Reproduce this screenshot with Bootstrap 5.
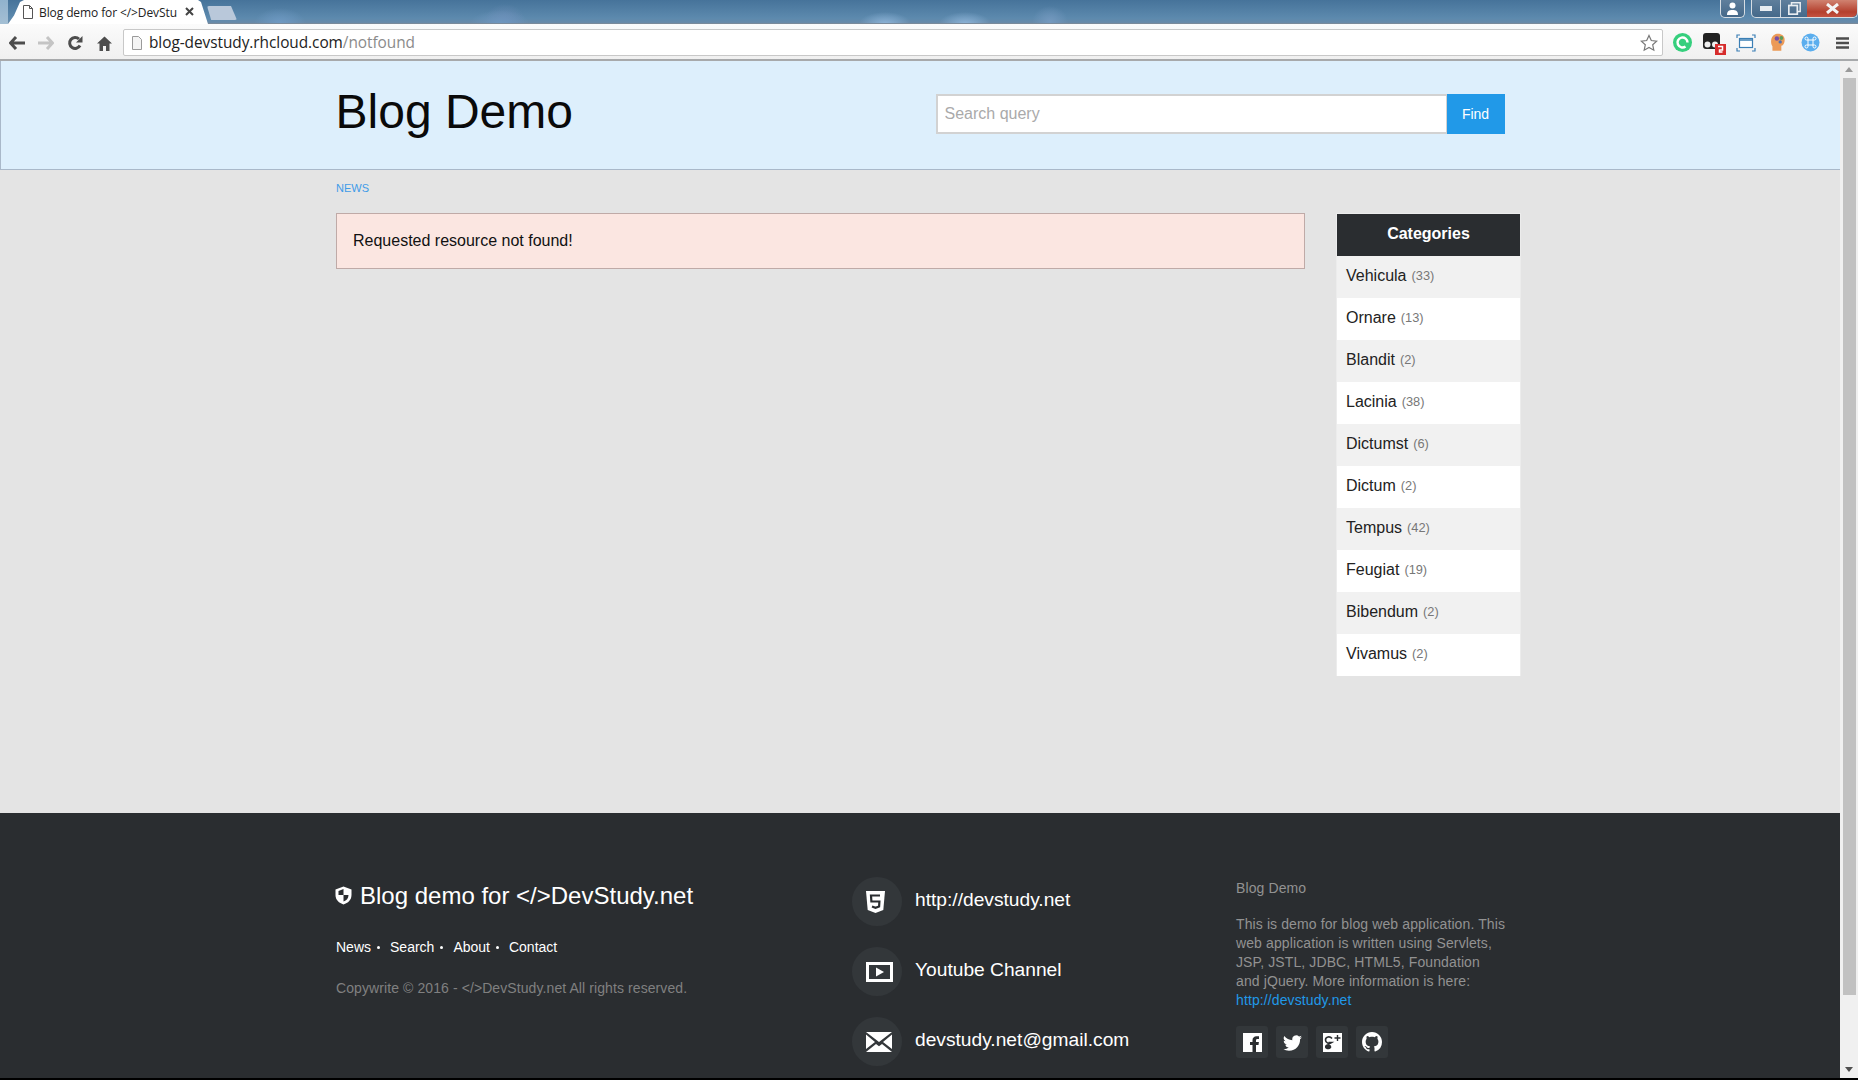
<!DOCTYPE html>
<html lang="en">
<head>
<meta charset="utf-8">
<title>Blog demo for &lt;/&gt;DevStudy.net</title>
<link rel="stylesheet" href="https://cdn.jsdelivr.net/npm/bootstrap@5.3.0/dist/css/bootstrap.min.css">
<style>
html,body{height:1080px;overflow:hidden}
body{margin:0;background:#000;font-family:"Liberation Sans",Arial,sans-serif;color:#0a0a0a}
.shell-top{height:24px;background:
 radial-gradient(ellipse 26px 16px at 280px 24px,#6f9ac4,transparent),
 radial-gradient(ellipse 30px 14px at 500px 24px,#6f97bf,transparent),
 radial-gradient(ellipse 20px 16px at 505px 20px,#688ab4,transparent),
 radial-gradient(ellipse 26px 12px at 885px 24px,#8db4d8,transparent),
 radial-gradient(ellipse 26px 12px at 965px 24px,#8db4d8,transparent),
 radial-gradient(ellipse 18px 16px at 1050px 22px,#7499bf,transparent),
 linear-gradient(#46739a,#5d8aae 80%,#6a8aa8);
 border-bottom:1px solid #7a8a9a}
.shell-left{width:8px;height:24px;background:linear-gradient(#90b2cd,#a4bfd4)}
.tab-main{width:200px;height:24px;margin-left:0;background:#fff;clip-path:polygon(0 100%,3% 65%,6% 8%,8% 0,95% 0,96.500% 8%,100% 100%);padding:4px 0 0 25px;font:12px/18px "Open Sans","Liberation Sans",sans-serif;color:#222;white-space:nowrap;position:relative}
.tab-name{width:139px;overflow:hidden;letter-spacing:-.1px;margin-left:6px}
.tab-doc{position:absolute;left:14px;top:5px}
.tab-x{position:absolute;left:176px;top:6px}
.tab-new{width:30px;height:14px;margin:6px 0 0 -1px;background:#b9c8da;clip-path:polygon(0 0,80% 0,100% 100%,14% 100%);border-radius:2px}
.win-box{height:18px;border:1px solid #d6dde3;border-top:0;border-radius:0 0 5px 5px;background:linear-gradient(#5f7f9c,#45698a)}
.win-user{width:25px;margin-right:6px}
.win-min,.win-max{width:28px}
.win-max{width:27px;border-left:1px solid #d6dde3}
.win-close{width:50px;background:linear-gradient(#d08270,#b4402e 70%,#c45240);border-radius:0 0 5px 0}
.win-group{padding:0;overflow:hidden}
.shell-bar{height:37px;background:linear-gradient(#fbfbfb,#f0f0f0);border-bottom:2px solid #a7a9ab;padding:2px 0 0 9px}
.nav-ico{width:29px}
.nav-home{padding-left:1px}
.addr{width:1540px;height:27px;margin-left:-2px;background:#fff;border:1px solid #c8c8c8;border-radius:2px;padding-left:7px;padding-right:4px;font:15.400px/25px "Open Sans","Liberation Sans",sans-serif;color:#222;letter-spacing:-.05px}
.addr-path{color:#8b8b8b}
.addr-text{margin-left:6px}
.ext-row{margin-left:3px}
.ext-cell{width:32px}
.view{height:1017px}
.page-col{width:1840px;background:#e4e4e4}
.scroll-col{width:18px;background:#f0f0f0;padding-top:6px}
.scroll-thumb{width:13px;height:917px;margin:6px auto 0;background:#c1c1c1}
.scroll-up{width:0;height:0;margin:0 auto;border-left:4px solid transparent;border-right:4px solid transparent;border-bottom:5px solid #9a9a9a}
.scroll-down{width:0;height:0;margin:72px auto 0;border-left:4px solid transparent;border-right:4px solid transparent;border-top:5px solid #505050}
.site-head{height:109px;background:#ddeffc;border:1px solid #a9b8c9;border-top:0;border-right:0}
.blog-wrap{width:1200px;margin:0 auto;padding:0 16px}
.site-title{font-size:48px;line-height:58px;font-weight:400;margin:22px 0 0 -1px;color:#0a0a0a}
.search-box{width:569px;margin-top:33px}
.search-box .form-control{height:40px;border:2px solid #d2d2d2;border-radius:0;padding:0 7px;font-size:16px;color:#333;box-shadow:none;background:#fff}
.search-box .form-control::placeholder{color:#aaa}
.btn-find{width:58px;height:40px;background:#2199e8;color:#fff;border:0;border-radius:0;font-size:14px;padding:0}
.content-area{flex:1 1 auto}
.crumb-link{display:block;font-size:11px;line-height:13px;color:#3e9be8;text-transform:uppercase;text-decoration:none;margin:12px 0 18px}
.miss-alert{height:56px;width:969px;background:#fbe6e1;border:1px solid #bfaaa7;border-radius:0;padding:0 0 1px 16px;font-size:16px;color:#111;margin:0}
.cat-box{width:185px;margin-top:43px;border:1px solid #ececec;border-bottom:0}
.cat-title{height:42px;background:#2a2d30;color:#fff;font-size:16px;font-weight:700;padding-bottom:2px}
.cat-line{height:42px;padding:0 8px 2px 9px;background:#fff;border:0;border-radius:0;font-size:16px;color:#222;line-height:1}
.cat-line:nth-child(odd){background:#f1f1f1}
.cat-num{color:#777;font-size:12.800px;margin-left:5px}
.site-foot{height:265px;background:#2a2d30;color:#fff}
.foot-a,.foot-b,.foot-c{flex:none}
.foot-a{width:516px;padding-top:68px}
.foot-b{width:384px;padding-top:64px;gap:21px}
.foot-c{width:272px;padding-top:66px;font-size:14px;line-height:19px;color:#929292;letter-spacing:.11px}
.foot-title{font-size:24px;line-height:29px;font-weight:400;margin:0;white-space:nowrap;gap:8px}
.foot-shield{margin-left:-1px}
.foot-nav{font-size:14px;line-height:17px;margin-top:29px;gap:6px}
.foot-nav a{color:#fff;text-decoration:none}
.foot-dot{width:3px;height:3px;border-radius:50%;background:#fff}
.foot-copy{font-size:14px;line-height:17px;color:#808080;margin:24px 0 0;letter-spacing:.09px}
.round-ico{width:50px;height:49px;border-radius:50%;background:#33373a;flex:none;padding-left:14px}
.foot-link{font-size:19.200px;line-height:23px;color:#fff;text-decoration:none;margin:0 0 4px 1px}
.foot-p{margin:17px 0 0}
.foot-p a{color:#2199e8;text-decoration:none}
.social-row{gap:8px;margin-top:16px}
.social-btn{width:32px;height:32px;background:#33373a;border-radius:3px}
.base-strip{height:2px;background:#000}
</style>
</head>
<body class="d-flex flex-column">

<div class="shell-top d-flex align-items-start">
  <div class="shell-left"></div>
  <div class="tab-main">
    <svg class="tab-doc" width="12" height="14" viewBox="0 0 12 14"><path d="M1.500.5h6l3 3v10h-9z M7.500.5v3h3" fill="#fff" stroke="#555"/></svg>
    <div class="tab-name">Blog demo for &lt;/&gt;DevStu</div>
    <svg class="tab-x" width="11" height="11" viewBox="0 0 11 11"><path d="M2 2l7 7M9 2l-7 7" stroke="#444" stroke-width="2"/></svg>
  </div>
  <div class="tab-new"></div>
  <div class="ms-auto d-flex align-items-start">
    <div class="win-box win-user d-flex align-items-center justify-content-center">
      <svg width="13" height="13" viewBox="0 0 13 13"><circle cx="6.500" cy="3.500" r="3" fill="#fff"/><path d="M1 13c0-4 2-5 5.500-5s5.500 1 5.500 5z" fill="#fff"/></svg>
    </div>
    <div class="win-box win-group d-flex">
      <div class="win-min d-flex align-items-center justify-content-center"><svg width="12" height="5" viewBox="0 0 12 5"><rect width="12" height="5" fill="#e8edf1"/></svg></div>
      <div class="win-max d-flex align-items-center justify-content-center"><svg width="13" height="13" viewBox="0 0 13 13"><path d="M3.500 3V.8h8.700v8.700H10" fill="none" stroke="#e8edf1" stroke-width="1.500"/><rect x=".8" y="3.500" width="8.500" height="8.700" fill="none" stroke="#e8edf1" stroke-width="1.700"/></svg></div>
      <div class="win-close d-flex align-items-center justify-content-center"><svg width="17" height="11" viewBox="0 0 17 11"><path d="M3 1l11 9M14 1L3 10" stroke="#f4f4f4" stroke-width="3"/></svg></div>
    </div>
  </div>
</div>

<div class="shell-bar d-flex align-items-center">
  <div class="nav-ico"><svg width="16" height="14" viewBox="0 0 16 14"><path d="M7 1L1.500 7 7 13M2 7h14" fill="none" stroke="#4d4d4d" stroke-width="3"/></svg></div>
  <div class="nav-ico"><svg width="16" height="14" viewBox="0 0 16 14"><path d="M9 1l5.500 6L9 13M14 7H0" fill="none" stroke="#c4c4c4" stroke-width="3"/></svg></div>
  <div class="nav-ico"><svg width="16" height="16" viewBox="0 0 16 16"><path d="M13 10.500A5.500 5.500 0 1 1 12 4" fill="none" stroke="#4d4d4d" stroke-width="3"/><path d="M15.500 1v6.500H9z" fill="#4d4d4d"/></svg></div>
  <div class="nav-ico nav-home"><svg width="15" height="15" viewBox="0 0 15 15"><path d="M7.500.5L0 7.500h2.500V15H6v-5h3v5h3.500V7.500H15z" fill="#4d4d4d"/></svg></div>
  <div class="addr d-flex align-items-center">
    <svg width="12" height="14" viewBox="0 0 12 14"><path d="M1.500.5h6l3 3v10h-9z" fill="#f4f4f4" stroke="#9a9a9a"/></svg>
    <span class="addr-text">blog-devstudy.rhcloud.com<span class="addr-path">/notfound</span></span>
    <svg class="ms-auto" width="18" height="18" viewBox="0 0 18 18"><path d="M9 1.500l2.300 5 5.400.6-4 3.700 1.100 5.400L9 13.500l-4.800 2.700 1.100-5.400-4-3.700 5.400-.6z" fill="#fff" stroke="#777" stroke-width="1.200"/></svg>
  </div>
  <div class="ext-row d-flex align-items-center">
    <div class="ext-cell d-flex justify-content-center"><svg width="19" height="19" viewBox="0 0 19 19"><circle cx="9.500" cy="9.500" r="9.500" fill="#35cf7d"/><path d="M12.500 13.500A5 5 0 1 1 14.500 9.500" fill="none" stroke="#fff" stroke-width="2.500"/></svg></div>
    <div class="ext-cell d-flex justify-content-center"><svg width="24" height="24" viewBox="0 0 24 24"><rect x="1" y="2" width="17" height="16" rx="3" fill="#222"/><circle cx="5.500" cy="13.500" r="3" fill="#eee"/><circle cx="13" cy="13.500" r="3" fill="#eee"/><rect x="13" y="13" width="11" height="11" fill="#d62c2c"/><path d="M16 15.500h4.500v3.500h-3v2h3" fill="none" stroke="#fff" stroke-width="1.500"/></svg></div>
    <div class="ext-cell d-flex justify-content-center"><svg width="20" height="18" viewBox="0 0 20 18"><path d="M1 4V1h3M16 1h3v3M19 14v3h-3M4 17H1v-3" fill="none" stroke="#3b7fb5" stroke-width="1.200"/><rect x="3.500" y="4.500" width="13" height="9" fill="#fff" stroke="#3b7fb5" stroke-width="1.200"/><path d="M3.500 6h13" stroke="#3b7fb5" stroke-width="1.500"/></svg></div>
    <div class="ext-cell d-flex justify-content-center"><svg width="16" height="20" viewBox="0 0 14 18"><path d="M2 16v-4C0 9 0 3 5 1c4-1 8 1 8 5 0 3-1 5-3 5.500V16z" fill="#ec9a57"/><circle cx="6" cy="5" r="2" fill="#7a4fa3"/><circle cx="10" cy="4.500" r="1.700" fill="#5b9c5b"/><circle cx="9" cy="8" r="1.500" fill="#4b6fb5"/></svg></div>
    <div class="ext-cell d-flex justify-content-center"><svg width="19" height="19" viewBox="0 0 19 19"><circle cx="9.500" cy="9.500" r="9" fill="#5baeee"/><path d="M7 7h5v5H7zM7 7H5.500a1.500 1.500 0 1 1 1.500-1.500zM12 7V5.500A1.500 1.500 0 1 1 13.500 7zM7 12v1.500A1.500 1.500 0 1 1 5.500 12zM12 12h1.500a1.500 1.500 0 1 1-1.500 1.500z" fill="none" stroke="#fff"/></svg></div>
    <div class="ext-cell d-flex justify-content-center"><svg width="13" height="12" viewBox="0 0 13 12"><path d="M0 1.500h13M0 6h13M0 10.500h13" stroke="#4d4d4d" stroke-width="2.400"/></svg></div>
  </div>
</div>

<div class="view d-flex">
  <div class="page-col d-flex flex-column">
    <header class="site-head">
      <div class="blog-wrap d-flex justify-content-between">
        <h1 class="site-title">Blog Demo</h1>
        <form class="search-box input-group flex-nowrap">
          <input class="form-control" type="text" placeholder="Search query" aria-label="Search query">
          <button class="btn btn-find" type="button">Find</button>
        </form>
      </div>
    </header>

    <main class="content-area">
      <div class="blog-wrap row g-0 px-0">
        <div class="col-10 px-3">
          <a class="crumb-link" href="#">News</a>
          <div class="alert miss-alert d-flex align-items-center" role="alert">Requested resource not found!</div>
        </div>
        <div class="col-2 ps-3 pe-0">
          <div class="cat-box">
            <div class="cat-title d-flex align-items-center justify-content-center">Categories</div>
            <div class="list-group rounded-0">
              <div class="list-group-item cat-line d-flex align-items-center">Vehicula <span class="cat-num">(33)</span></div>
              <div class="list-group-item cat-line d-flex align-items-center">Ornare <span class="cat-num">(13)</span></div>
              <div class="list-group-item cat-line d-flex align-items-center">Blandit <span class="cat-num">(2)</span></div>
              <div class="list-group-item cat-line d-flex align-items-center">Lacinia <span class="cat-num">(38)</span></div>
              <div class="list-group-item cat-line d-flex align-items-center">Dictumst <span class="cat-num">(6)</span></div>
              <div class="list-group-item cat-line d-flex align-items-center">Dictum <span class="cat-num">(2)</span></div>
              <div class="list-group-item cat-line d-flex align-items-center">Tempus <span class="cat-num">(42)</span></div>
              <div class="list-group-item cat-line d-flex align-items-center">Feugiat <span class="cat-num">(19)</span></div>
              <div class="list-group-item cat-line d-flex align-items-center">Bibendum <span class="cat-num">(2)</span></div>
              <div class="list-group-item cat-line d-flex align-items-center">Vivamus <span class="cat-num">(2)</span></div>
            </div>
          </div>
        </div>
      </div>
    </main>

    <footer class="site-foot">
      <div class="blog-wrap d-flex">
        <div class="foot-a">
          <h2 class="foot-title d-flex align-items-center">
            <svg class="foot-shield" width="17" height="19" viewBox="0 0 17 19"><path d="M8.500.5L16.500 3.500V9c0 5-3.500 8-8 9.500C4 17 .5 14 .5 9V3.500z" fill="#fff"/><path d="M8.500 3v6H3.500V5zM8.500 9h5c0 3.500-2 5.500-5 6.500z" fill="#2a2d30"/></svg>
            Blog demo for &lt;/&gt;DevStudy.net
          </h2>
          <nav class="foot-nav d-flex align-items-center">
            <a href="#">News</a><span class="foot-dot"></span>
            <a href="#" class="ms-1">Search</a><span class="foot-dot"></span>
            <a href="#" class="ms-1">About</a><span class="foot-dot"></span>
            <a href="#" class="ms-1">Contact</a>
          </nav>
          <p class="foot-copy">Copywrite &copy; 2016 - &lt;/&gt;DevStudy.net All rights reserved.</p>
        </div>
        <div class="foot-b d-flex flex-column">
          <div class="d-flex align-items-center gap-2">
            <div class="round-ico d-flex align-items-center me-1">
              <svg width="19" height="22" viewBox="0 0 19 22"><path d="M0 0h19l-1.700 19L9.500 22l-7.800-3z" fill="#fff"/><path d="M14 4.500H5l.4 6h8l-.3 5-3.600 1.300L6 15.500" fill="none" stroke="#2a2d30" stroke-width="2.200"/></svg>
            </div>
            <a class="foot-link" href="#">http://devstudy.net</a>
          </div>
          <div class="d-flex align-items-center gap-2">
            <div class="round-ico d-flex align-items-center me-1">
              <svg width="27" height="20" viewBox="0 0 27 20"><rect x="1.500" y="1.500" width="24" height="17" fill="none" stroke="#fff" stroke-width="3"/><path d="M10 5.500v9l8-4.500z" fill="#fff"/></svg>
            </div>
            <a class="foot-link" href="#">Youtube Channel</a>
          </div>
          <div class="d-flex align-items-center gap-2">
            <div class="round-ico d-flex align-items-center me-1">
              <svg width="26" height="20" viewBox="0 0 26 20"><path d="M0 0h26L13 10z M0 2.500L9 10 0 17z M26 2.500L17 10l9 7z M0 20l10-8 3 2.300 3-2.300 10 8z" fill="#fff"/></svg>
            </div>
            <a class="foot-link" href="#">devstudy.net@gmail.com</a>
          </div>
        </div>
        <div class="foot-c">
          <div>Blog Demo</div>
          <p class="foot-p">This is demo for blog web application. This web application is written using Servlets, JSP, JSTL, JDBC, HTML5, Foundation and&nbsp;jQuery. More information is here: <a href="#">http://devstudy.net</a></p>
          <div class="social-row d-flex">
            <a class="social-btn d-flex align-items-center justify-content-center" href="#" aria-label="Facebook">
              <svg width="19" height="19" viewBox="0 0 19 19"><rect width="19" height="19" fill="#fff"/><path d="M13 19v-7h2.500l.4-3H13V7.500c0-1 .4-1.500 1.500-1.500H16V3.300h-2.500C11 3.300 9.500 5 9.500 7.200V9H7v3h2.500v7z" fill="#2a2d30"/></svg>
            </a>
            <a class="social-btn d-flex align-items-center justify-content-center" href="#" aria-label="Twitter">
              <svg width="19" height="19" viewBox="0 0 16 16"><path fill="#fff" d="M5.026 15c6.038 0 9.341-5.003 9.341-9.334 0-.14 0-.282-.006-.422A6.685 6.685 0 0 0 16 3.542a6.658 6.658 0 0 1-1.889.518 3.301 3.301 0 0 0 1.447-1.817 6.533 6.533 0 0 1-2.087.793A3.286 3.286 0 0 0 7.875 6.030a9.325 9.325 0 0 1-6.767-3.429 3.289 3.289 0 0 0 1.018 4.382A3.323 3.323 0 0 1 .64 6.575v.045a3.288 3.288 0 0 0 2.632 3.218 3.203 3.203 0 0 1-.865.115 3.230 3.230 0 0 1-.614-.057 3.283 3.283 0 0 0 3.067 2.277A6.588 6.588 0 0 1 .78 13.580a6.320 6.320 0 0 1-.78-.045A9.344 9.344 0 0 0 5.026 15z"/></svg>
            </a>
            <a class="social-btn d-flex align-items-center justify-content-center" href="#" aria-label="Google Plus">
              <svg width="19" height="19" viewBox="0 0 19 19"><rect width="19" height="19" fill="#fff"/><path d="M9 5.500C7 3 2.500 3.500 2.500 7c0 3 3.500 4 6 2.500H5.500" fill="none" stroke="#2a2d30" stroke-width="1.600"/><path d="M6 11c-3 0-4.500 1.500-4 3.500s4.500 2.500 6 .5c1-1.500-.5-3-2-4z" fill="#2a2d30"/><path d="M14.500 2v6M11.500 5h6" stroke="#2a2d30" stroke-width="1.400"/></svg>
            </a>
            <a class="social-btn d-flex align-items-center justify-content-center" href="#" aria-label="GitHub">
              <svg width="20" height="20" viewBox="0 0 16 16"><path fill="#fff" d="M8 0C3.580 0 0 3.580 0 8c0 3.540 2.290 6.530 5.470 7.590.4.070.55-.17.55-.38 0-.19-.01-.82-.01-1.490-2.010.37-2.530-.49-2.690-.94-.09-.23-.48-.94-.82-1.130-.28-.15-.68-.52-.01-.53.63-.01 1.080.58 1.230.82.720 1.210 1.870.87 2.330.66.070-.52.28-.87.51-1.070-1.780-.2-3.640-.89-3.640-3.950 0-.87.31-1.590.82-2.150-.08-.2-.36-1.020.08-2.120 0 0 .67-.21 2.200.82.640-.18 1.320-.27 2-.27.680 0 1.360.09 2 .27 1.530-1.040 2.200-.82 2.200-.82.44 1.100.16 1.920.08 2.120.51.56.82 1.270.82 2.150 0 3.070-1.870 3.750-3.650 3.950.29.25.54.73.54 1.480 0 1.070-.01 1.930-.01 2.200 0 .21.15.46.55.38A8.012 8.012 0 0 0 16 8c0-4.420-3.580-8-8-8z"/></svg>
            </a>
          </div>
        </div>
      </div>
    </footer>
  </div>
  <div class="scroll-col">
    <div class="scroll-up"></div>
    <div class="scroll-thumb"></div>
    <div class="scroll-down"></div>
  </div>
</div>
<div class="base-strip"></div>

<script src="https://cdn.jsdelivr.net/npm/bootstrap@5.3.0/dist/js/bootstrap.bundle.min.js"></script>
</body>
</html>
